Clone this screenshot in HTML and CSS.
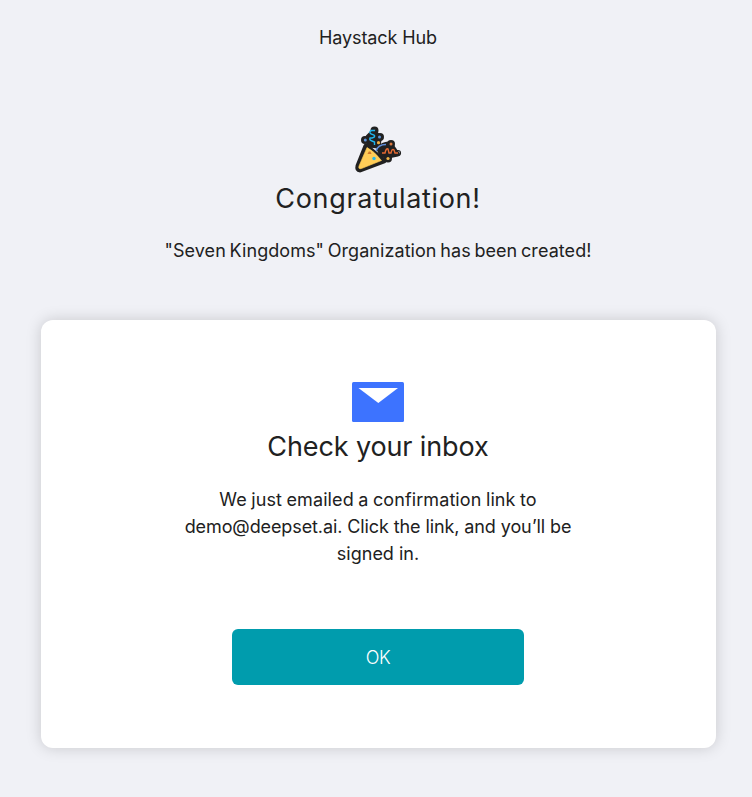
FILE: index.html
```html
<!DOCTYPE html>
<html lang="en">
<head>
<meta charset="utf-8">
<title>Haystack Hub</title>
<link rel="stylesheet" href="styles.css">
</head>
<body>
<main class="page">
  <header class="brand">Haystack Hub</header>
  <section class="intro">
    <svg class="party" viewBox="0 0 60 60" aria-hidden="true">
      <g fill="#212121" stroke="#212121" stroke-width="5" stroke-linejoin="round">
        <path d="M18 26 36 41 12 50Q9 50 10 46Z"/>
        <path d="M20 17 25 12 31.500 17 30 26 21 25Z"/>
        <path d="M31 29Q35 23.500 42 24L47 31 49.500 34 40 36 34 35Z"/>
        <circle cx="26.500" cy="10.500" r="1.500"/><circle cx="17" cy="20" r="1.500"/>
        <circle cx="32" cy="17" r="1.500"/><circle cx="43" cy="24" r="1.500"/>
        <circle cx="50" cy="33" r=".6"/><circle cx="40" cy="38.500" r="1.500"/>
      </g>
      <path d="M19 27.500Q26 31 33.500 40.500L13.500 48.500Q10 49.500 11 46Z" fill="#ffcd57" stroke="#ffcd57" stroke-width=".6" stroke-linejoin="round"/>
      <path d="M28 31Q30 24.500 38 24.500" fill="none" stroke="#5e8edb" stroke-width="1.700"/>
      <path d="M27 10.500H23.500Q20.500 12 23 14L26 15Q28 17 24 18H22Q21 20 24 21L26.500 22V25" fill="none" stroke="#20b5ee" stroke-width="1.400"/>
      <path d="M34 33H37Q38 28 40 29L41 33H43Q44 28 46 30L47 33H50" fill="none" stroke="#e66a32" stroke-width="1.400"/>
      <circle cx="17.300" cy="20" r="1.500" fill="#6094d8"/><circle cx="31.500" cy="17" r="1.500" fill="#6094d8"/>
      <circle cx="30.500" cy="22.700" r="1.600" fill="#efad3f"/><circle cx="43" cy="24" r="1.500" fill="#da7940"/>
      <circle cx="40" cy="38.500" r="1.600" fill="#efb447"/><circle cx="26" cy="38.500" r="1.700" fill="#29b8e9"/>
      <path d="M19.500 34 20.800 31.500H22.500L23.500 34Z" fill="#cf7a2d"/>
    </svg>
    <h1 class="title t-congrats">Congratulation!</h1>
    <p class="text t-org">"Seven Kingdoms" Organization has been created!</p>
  </section>
  <section class="card">
    <svg class="mail" viewBox="0 0 52 40" aria-hidden="true">
      <rect width="52" height="40" rx="1.500" fill="#3d73ff"/>
      <path d="M6.500 6H46L26.300 21Z" fill="#fff"/>
    </svg>
    <h2 class="title t-inbox">Check your inbox</h2>
    <p class="text message"><span class="t-l1">We just emailed a confirmation link to</span><br><span class="t-l2">demo@deepset.ai. Click the link, and you’ll be</span><br>signed in.</p>
    <button class="ok" type="button">OK</button>
  </section>
</main>
</body>
</html>
```
FILE: styles.css
```css
* { box-sizing: border-box; }
body {
  margin: 0;
  background: #f0f1f6;
  color: #212121;
  font: 440 18px/27px Inter, "Liberation Sans", sans-serif;
}
.page {
  display: flex;
  flex-direction: column;
  align-items: center;
  min-height: 797px;
  padding: 24px 36px 0 41px;
}
.brand { padding-right: 1px; letter-spacing: -0.1px; }
.intro {
  display: flex;
  flex-direction: column;
  align-items: center;
  padding-right: 1px;
  margin-top: 69px;
}
.party { width: 60px; height: 60px; }
.title {
  margin: 0;
  font-size: 27px;
  font-weight: 440;
  line-height: 42px;
}
.intro .title { margin-top: -2px; }
.text { margin: 17px 0 0; white-space: nowrap; text-align: center; }
.t-congrats { letter-spacing: 0.65px; }
.t-org { letter-spacing: 0.06px; word-spacing: -1.4px; }
.t-inbox { letter-spacing: -0.12px; }
.t-l1 { letter-spacing: 0.1px; word-spacing: -0.7px; }
.t-l2 { letter-spacing: -0.1px; }
.card {
  display: flex;
  flex-direction: column;
  align-items: center;
  width: 675px;
  height: 428px;
  margin-top: 56px;
  padding: 62px 1px 0 0;
  border-radius: 12px;
  background: #fff;
  box-shadow: 0 0 15px rgba(0, 0, 0, 0.17);
}
.mail { width: 52px; height: 40px; }
.card .title { margin-top: 4px; }
.message { margin-top: 18px; }
.ok {
  width: 292px;
  height: 56px;
  margin-top: 62px;
  padding: 0;
  border: 0;
  border-radius: 6px;
  background: #009cad;
  color: #fff;
  font: 300 18px/27px Inter, "Liberation Sans", sans-serif;
  letter-spacing: -0.4px;
}
```
